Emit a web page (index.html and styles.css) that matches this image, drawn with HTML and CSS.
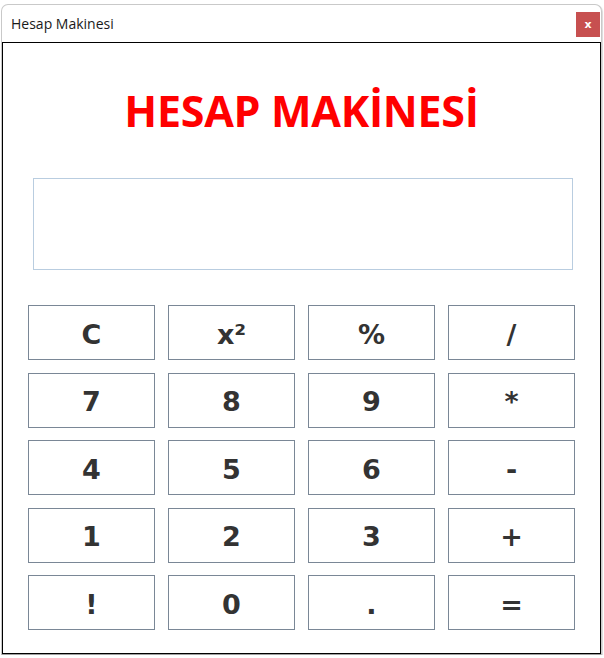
FILE: index.html
```html
<!DOCTYPE html>
<html lang="tr">
<head>
<meta charset="utf-8">
<title>Hesap Makinesi</title>
<link rel="stylesheet" href="styles.css">
</head>
<body>
<div class="window">
  <div class="titlebar">
    <span class="title">Hesap Makinesi</span>
    <span class="close">x</span>
  </div>
  <div class="content">
    <h1 class="heading">HESAP MAKİNESİ</h1>
    <div class="display"></div>
    <div class="keys">
      <button class="key">C</button>
      <button class="key">x²</button>
      <button class="key">%</button>
      <button class="key">/</button>
      <button class="key">7</button>
      <button class="key">8</button>
      <button class="key">9</button>
      <button class="key">*</button>
      <button class="key">4</button>
      <button class="key">5</button>
      <button class="key">6</button>
      <button class="key">-</button>
      <button class="key">1</button>
      <button class="key">2</button>
      <button class="key">3</button>
      <button class="key">+</button>
      <button class="key">!</button>
      <button class="key">0</button>
      <button class="key">.</button>
      <button class="key">=</button>
    </div>
  </div>
</div>
</body>
</html>
```
FILE: styles.css
```css
html, body {
  margin: 0;
  padding: 0;
  background: #ffffff;
}
body {
  padding: 4px 0 0 1px;
}
.window {
  width: 599px;
  border: 1px solid #c9c9c9;
  border-bottom-color: #a0a0a0;
  border-radius: 7px 7px 0 0;
  background: #ffffff;
  box-shadow: 1px 1px 1px rgba(0,0,0,0.15);
}
.titlebar {
  height: 37px;
  display: flex;
  align-items: center;
  justify-content: space-between;
}
.title {
  font-family: "Open Sans", sans-serif;
  font-size: 14px;
  color: #1a1a1a;
  padding-left: 9px;
  margin-top: -1px;
}
.close {
  width: 24px;
  height: 25px;
  margin-right: 1px;
  margin-top: 2px;
  background: #c75050;
  color: #ffffff;
  font-family: "DejaVu Sans", sans-serif;
  font-weight: bold;
  font-size: 11px;
  display: flex;
  align-items: center;
  justify-content: center;
}
.content {
  border: 1px solid #000000;
  height: 610px;
  box-sizing: content-box;
}
.heading {
  margin: 38px 0 0 0;
  text-align: center;
  font-family: "Open Sans", sans-serif;
  font-weight: 700;
  font-size: 43px;
  line-height: 60px;
  color: #ff0000;
  letter-spacing: -0.3px;
}
.display {
  margin: 37px 0 0 30px;
  width: 538px;
  height: 90px;
  border: 1px solid #b9cde0;
}
.keys {
  margin: 35px 0 0 25px;
  display: grid;
  grid-template-columns: repeat(4, 127px);
  grid-auto-rows: 55px;
  column-gap: 13px;
  row-gap: 12.5px;
}
.key {
  margin: 0;
  padding: 3px 0 0 0;
  border: 1px solid #7a8796;
  background: #ffffff;
  font-family: "DejaVu Sans", Verdana, sans-serif;
  font-weight: bold;
  font-size: 27px;
  color: #333333;
  display: flex;
  align-items: center;
  justify-content: center;
}
```
